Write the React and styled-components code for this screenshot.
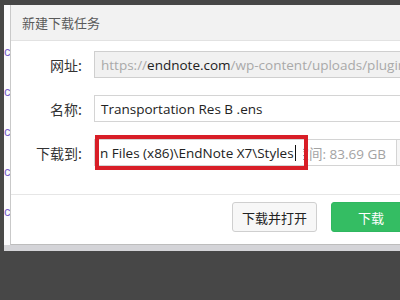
import React from "react";
import styled, { createGlobalStyle } from "styled-components";

const GlobalStyle = createGlobalStyle`
  html, body {
    margin: 0;
    padding: 0;
    background: #474747;
    overflow: hidden;
  }
`;

const App = () => {
  return (
    <>
      <GlobalStyle />
      <Screen>
        <Page>
          <Gutter>
            {[0, 1, 2, 3, 4].map((i) => (
              <GutterMark key={i}>c</GutterMark>
            ))}
          </Gutter>
          <Dialog>
            <TitleBar>新建下载任务</TitleBar>
            <Body>
              <Row>
                <Label>网址:</Label>
                <Field $disabled>
                  <Dim>https://</Dim>endnote.com<Dim>/wp-content/uploads/plugins/endnote</Dim>
                </Field>
              </Row>
              <Row>
                <Label>名称:</Label>
                <Field>Transportation Res B .ens</Field>
              </Row>
              <Row>
                <Label>下载到:</Label>
                <PathField>
                  <PathText>
                    n Files (x86)\EndNote X7\Styles<Caret />
                  </PathText>
                  <Space>剩余空间: 83.69 GB</Space>
                </PathField>
                <BrowseButton />
                <Highlight />
              </Row>
            </Body>
            <Footer>
              <Button>下载并打开</Button>
              <Button $primary>下载</Button>
            </Footer>
          </Dialog>
        </Page>
        <PageEdge />
      </Screen>
    </>
  );
};

const Screen = styled.div`
  position: relative;
  width: 400px;
  height: 300px;
  overflow: hidden;
  padding-top: 5px;
  box-sizing: border-box;
  font-family: "Open Sans", "Noto Sans CJK SC", sans-serif;
`;

const Page = styled.div`
  display: flex;
  margin-left: 4px;
  width: 430px;
  height: 240px;
  background: #fbfbfd;
`;

const Gutter = styled.div`
  flex: none;
  width: 6px;
  display: flex;
  flex-direction: column;
  padding-top: 38px;
  gap: 23px;
  overflow: hidden;
`;

const GutterMark = styled.span`
  font-family: "Liberation Sans", sans-serif;
  font-size: 13px;
  line-height: 17px;
  color: #7a5fc8;
`;

const Dialog = styled.div`
  flex: 1;
  min-width: 0;
  display: flex;
  flex-direction: column;
  background: #ffffff;
  border-left: 1px solid #c9c9c9;
  border-bottom: 1px solid #bdbdbd;
`;

const TitleBar = styled.div`
  flex: none;
  height: 35px;
  display: flex;
  align-items: center;
  padding-left: 11px;
  background: #f2f2f2;
  border-bottom: 1px solid #e2e2e2;
  font-family: "Noto Sans CJK SC", sans-serif;
  font-size: 13px;
  color: #5a5a5a;
`;

const Body = styled.div`
  flex: none;
  display: flex;
  flex-direction: column;
  gap: 17px;
  padding-top: 10px;
  height: 143px;
  border-bottom: 1px solid #e6e6e6;
`;

const Row = styled.div`
  position: relative;
  display: flex;
  align-items: center;
  height: 27px;
`;

const Label = styled.div`
  flex: none;
  box-sizing: border-box;
  width: 83px;
  text-align: right;
  padding-right: 12px;
  font-family: "Noto Sans CJK SC", sans-serif;
  font-size: 14px;
  color: #333;
`;

const Field = styled.div`
  flex: 1;
  min-width: 0;
  height: 27px;
  box-sizing: border-box;
  display: flex;
  align-items: center;
  padding-left: 6px;
  border: 1px solid ${(p) => (p.$disabled ? "#cfcfcf" : "#d4d4d4")};
  background: ${(p) => (p.$disabled ? "#f1f1f1" : "#ffffff")};
  font-size: 13.5px;
  color: #222;
  white-space: nowrap;
  overflow: hidden;
`;

const Dim = styled.span`
  color: #a9a9a9;
`;

const PathField = styled.div`
  flex: none;
  width: 303px;
  height: 27px;
  box-sizing: border-box;
  display: flex;
  align-items: center;
  border: 1px solid #d4d4d4;
  font-size: 13.5px;
  white-space: nowrap;
`;

const PathText = styled.div`
  flex: none;
  width: 208px;
  box-sizing: border-box;
  padding-left: 5px;
  display: flex;
  align-items: center;
  color: #222;
  overflow: hidden;
`;

const Caret = styled.span`
  display: inline-block;
  width: 1px;
  height: 16px;
  margin-left: 1px;
  background: #111;
`;

const Space = styled.div`
  flex: 1;
  min-width: 0;
  display: flex;
  justify-content: flex-end;
  padding-right: 10px;
  overflow: hidden;
  color: #a3a3a3;
`;

const BrowseButton = styled.div`
  flex: 1;
  height: 27px;
  box-sizing: border-box;
  border: 1px solid #d4d4d4;
  border-left: none;
  background: #f6f6f6;
`;

const Highlight = styled.div`
  position: absolute;
  left: 84px;
  top: -4px;
  width: 213px;
  height: 35px;
  box-sizing: border-box;
  border: 4px solid #d81e27;
  pointer-events: none;
`;

const Footer = styled.div`
  flex: 1;
  display: flex;
  align-items: flex-start;
  gap: 14px;
  padding-top: 7px;
  padding-left: 221px;
`;

const Button = styled.div`
  flex: none;
  display: flex;
  align-items: center;
  justify-content: center;
  height: 30px;
  box-sizing: border-box;
  width: ${(p) => (p.$primary ? "80px" : "85px")};
  border-radius: 3px;
  border: 1px solid ${(p) => (p.$primary ? "#2fb760" : "#cfcfcf")};
  background: ${(p) => (p.$primary ? "#34bd63" : "#f7f7f7")};
  color: ${(p) => (p.$primary ? "#ffffff" : "#222")};
  font-family: "Noto Sans CJK SC", sans-serif;
  font-size: 13px;
`;

const PageEdge = styled.div`
  margin-left: 4px;
  width: 430px;
  height: 6px;
  background: #d4d4d8;
`;

export default App;
